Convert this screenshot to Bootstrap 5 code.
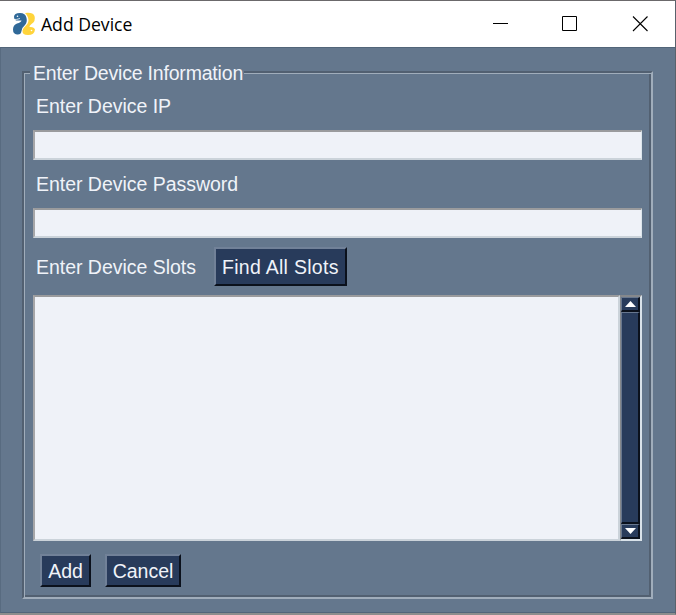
<!DOCTYPE html>
<html lang="en">
<head>
<meta charset="utf-8">
<meta name="viewport" content="width=device-width, initial-scale=1">
<title>Add Device</title>
<link href="https://cdn.jsdelivr.net/npm/bootstrap@5.3.0/dist/css/bootstrap.min.css" rel="stylesheet">
<style>
  html, body { height: 100%; margin: 0; overflow: hidden; }
  body { font-family: "Liberation Sans", Arial, sans-serif; font-size: 19.5px; line-height: 24px; color: #f0f3f9; background: #64778d; }
  .app-window { width: 676px; height: 615px; border-top: 1px solid #6b696b; border-right: 1px solid #59626c; border-bottom: 2px solid #8d8d8d; }
  .title-strip { height: 46px; background: #fff; color: #000; padding-left: 12px; font: 17.6px/24px "Open Sans", "Noto Sans", sans-serif; flex: none; }
  .title-strip span { margin-left: 5px; }
  .win-controls { padding-right: 27px; gap: 54px; }
  .client { border-top: 1px solid #526579; border-left: 1px solid #586b80; border-bottom: 1px solid #52657a; padding: 23px 22px 13px 21px; }
  .group-box { border: 2px solid; border-color: #526071 #a0adbb #a0adbb #526071; box-shadow: inset 1px 1px #a0adbb, inset -2px -2px #526071; padding: 0 9px; height: 528px; width: 631px; }
  .group-title { margin: -12px 0 0 -3px; padding: 0 1px 0 3px; background: #64778d; align-self: flex-start; height: 24px; letter-spacing: -.19px; }
  .field-label { height: 24px; padding-left: 3px; white-space: nowrap; letter-spacing: -.03px; }
  .entry { height: 30px; border: 2px solid; border-width: 2px 1px 2px 2px; border-color: #9a9b9d #dde6ec #cbd3da #a6a6a8; background: #eff2f8; border-radius: 0; padding: 0 4px; width: 609px; outline: 0; display: block; }
  .tk-btn { background: #283b5b; color: #f0f3f9; border: 2px solid; border-color: #718198 #0b111c #0b111c #718198; border-radius: 0; padding: 0; font-size: 19.5px; line-height: 24px; white-space: nowrap; }
  .btn-find { width: 133px; height: 39px; margin-left: 18px; letter-spacing: .28px; }
  .btn-add { width: 51px; height: 33px; }
  .btn-cancel { width: 76px; height: 33px; }
  .slots { width: 609px; height: 246px; }
  .slots-text { resize: none; border: 2px solid; border-color: #9a9b9d #cbd3da #cbd3da #a6a6a8; background: #eff2f8; width: 587px; border-radius: 0; padding: 4px; outline: 0; display: block; }
  .scroll-col { width: 22px; background: #283b5b; border: 1px solid; border-width: 2px 2px 2px 1px; border-color: #85888c #d9e2e9 #d9e2e9 #85888c; }
  .scroll-cap, .scroll-thumb { border: solid; border-width: 1px 2px 2px 1px; border-color: #68778e #0b111c #0b111c #68778e; }
  .scroll-cap { height: 15px; flex: none; }
  .scroll-cap svg { display: block; }
  .row-ip { margin-top: 9px; }
  .row-entry { margin-top: 12px; }
  .row-pass { margin: 12px 0 12px; }
  .row-slots { margin: 9px 0; }
  .actions { margin: 13px 0 0 7px; gap: 14px; }
</style>
<script src="https://cdn.jsdelivr.net/npm/bootstrap@5.3.0/dist/js/bootstrap.bundle.min.js"></script>
</head>
<body>
<div class="app-window d-flex flex-column">
  <header class="title-strip d-flex align-items-center justify-content-between">
    <div class="d-flex align-items-center">
      <svg width="24" height="24" viewBox="0 0 24 24" aria-hidden="true">
        <path d="M8 1Q2 1 2 5Q2 8 4 8.500H9.500Q9 10.500 5 11.500Q1 13 1 17.500Q1 22 5 22.500Q9 23 9.500 19Q9.500 16 13 13Q15.500 10 14.500 6Q13.500 1 8 1Z" fill="#306998"/>
        <path d="M13 1Q21 0 22.500 4Q24 9 19.500 12Q17 14 17.500 15Q22 14.500 23 17.500Q22.500 23 16 23Q10 23 10.500 18.500Q11 16 14 13.500Q17.500 10 16 5.500Q15 2.500 13 1Z" fill="#ffd43b"/>
        <path d="M1.500 7.500Q4.500 7.800 8 6.500" fill="none" stroke="#fff" stroke-width=".8"/>
        <circle cx="5.500" cy="4.200" r=".8" fill="#fff"/><circle cx="19.500" cy="18.500" r=".8" fill="#fff"/>
      </svg>
      <span>Add Device</span>
    </div>
    <div class="win-controls d-flex align-items-center">
      <svg width="16" height="16" aria-hidden="true"><path d="M1 7.5h15" stroke="#000" fill="none"/></svg>
      <svg width="15" height="16" aria-hidden="true"><path d="M.5.5h14v14H.5z" stroke="#000" fill="none"/></svg>
      <svg width="17" height="16" aria-hidden="true"><path d="M2 .5l14.5 14.5M16.5 .5L2 15" stroke="#000" fill="none" stroke-width="1.1"/></svg>
    </div>
  </header>
  <main class="client flex-grow-1">
    <form class="group-box d-flex flex-column" onsubmit="return false">
      <div class="group-title"><span>Enter Device Information</span></div>
      <label class="field-label row-ip" for="ip">Enter Device IP</label>
      <input class="entry row-entry" id="ip" type="text">
      <label class="field-label row-pass" for="pw">Enter Device Password</label>
      <input class="entry" id="pw" type="text">
      <div class="d-flex align-items-center row-slots">
        <label class="field-label" for="slots">Enter Device Slots</label>
        <button class="btn tk-btn btn-find" type="button">Find All Slots</button>
      </div>
      <div class="slots d-flex">
        <textarea class="slots-text" id="slots"></textarea>
        <div class="scroll-col d-flex flex-column">
          <div class="scroll-cap"><svg width="16" height="12" aria-hidden="true"><path d="M8.5 3l5.5 6H3z" fill="#fff"/></svg></div>
          <div class="scroll-thumb flex-grow-1"></div>
          <div class="scroll-cap"><svg width="16" height="12" aria-hidden="true"><path d="M3 3h11L8.500 9z" fill="#fff"/></svg></div>
        </div>
      </div>
      <div class="d-flex actions">
        <button class="btn tk-btn btn-add" type="button">Add</button>
        <button class="btn tk-btn btn-cancel" type="button">Cancel</button>
      </div>
    </form>
  </main>
</div>
</body>
</html>
